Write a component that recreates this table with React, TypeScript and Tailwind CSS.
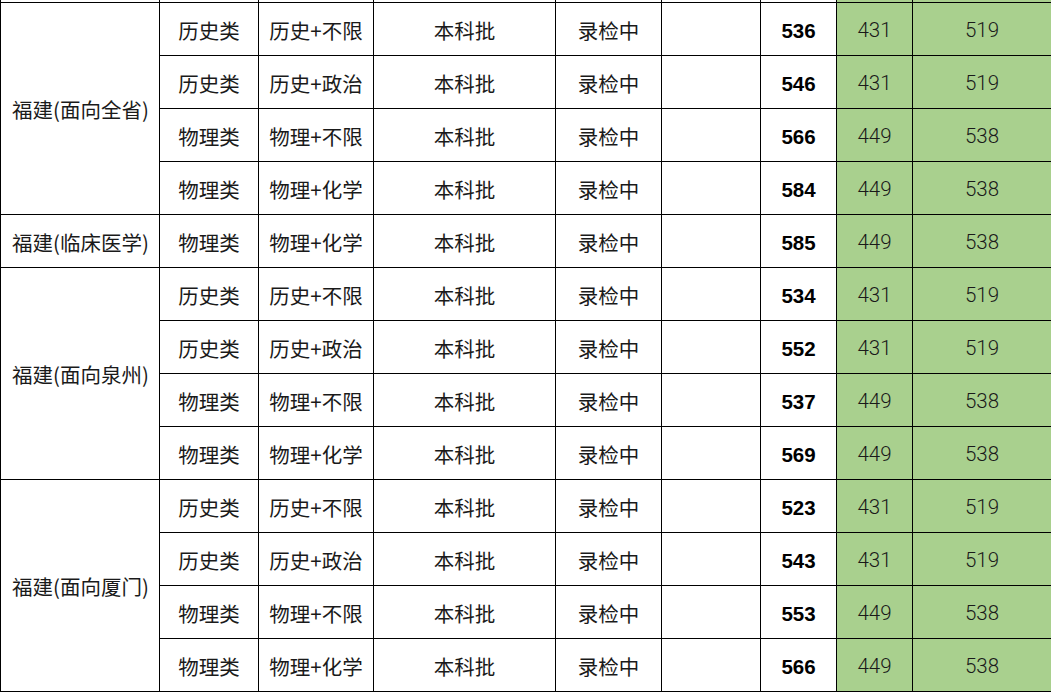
const groups = [
  {
    name: "福建(面向全省)",
    rows: [
      ["历史类", "历史+不限", "536", "431", "519"],
      ["历史类", "历史+政治", "546", "431", "519"],
      ["物理类", "物理+不限", "566", "449", "538"],
      ["物理类", "物理+化学", "584", "449", "538"],
    ],
  },
  {
    name: "福建(临床医学)",
    rows: [["物理类", "物理+化学", "585", "449", "538"]],
  },
  {
    name: "福建(面向泉州)",
    rows: [
      ["历史类", "历史+不限", "534", "431", "519"],
      ["历史类", "历史+政治", "552", "431", "519"],
      ["物理类", "物理+不限", "537", "449", "538"],
      ["物理类", "物理+化学", "569", "449", "538"],
    ],
  },
  {
    name: "福建(面向厦门)",
    rows: [
      ["历史类", "历史+不限", "523", "431", "519"],
      ["历史类", "历史+政治", "543", "431", "519"],
      ["物理类", "物理+不限", "553", "449", "538"],
      ["物理类", "物理+化学", "566", "449", "538"],
    ],
  },
]

const cell = "bg-white flex items-center justify-center pt-[2px] text-[20.5px] text-[#1a1a1a]"
const green = "bg-[#a9d08e] flex items-center justify-center pt-[3px] text-[20.5px] text-[#1a1a1a] font-light"

const spans: Record<number, string> = {
  1: "row-span-1",
  4: "row-span-4",
}

export default function App() {
  return (
    <div
      className="w-[1051px] h-[692px] overflow-hidden bg-white"
      style={{ fontFamily: '"Noto Sans CJK SC", "Noto Sans", sans-serif' }}
    >
      <div className="grid grid-cols-[158px_98px_114px_181px_105px_98px_75px_75px_138px] grid-rows-[2px_repeat(13,52px)] gap-px bg-black pl-px pb-px">
        {Array.from({ length: 9 }).map((_, i) => (
          <div key={"top" + i} className={i >= 7 ? "bg-[#a9d08e]" : "bg-white"} />
        ))}
        {groups.map((g) => (
          <GroupRows key={g.name} name={g.name} rows={g.rows} />
        ))}
      </div>
    </div>
  )
}

function GroupRows({ name, rows }: { name: string; rows: string[][] }) {
  return (
    <>
      {rows.map((r, i) => (
        <Row key={i} first={i === 0} name={name} span={spans[rows.length]} r={r} />
      ))}
    </>
  )
}

function Row({ first, name, span, r }: { first: boolean; name: string; span: string; r: string[] }) {
  return (
    <>
      {first && (
        <div className={`${cell} col-start-1 ${span} justify-start pl-[11px]`}>{name}</div>
      )}
      <div className={`${cell} col-start-2`}>{r[0]}</div>
      <div className={cell}>{r[1]}</div>
      <div className={cell}>本科批</div>
      <div className={cell}>录检中</div>
      <div className={cell}></div>
      <div className={`${cell} pt-[4px] font-bold text-black font-['Liberation_Sans',Arial,sans-serif]`}>{r[2]}</div>
      <div className={`${green} font-['Roboto','Noto_Sans',sans-serif]`}>{r[3]}</div>
      <div className={`${green} font-['Roboto','Noto_Sans',sans-serif]`}>{r[4]}</div>
    </>
  )
}
